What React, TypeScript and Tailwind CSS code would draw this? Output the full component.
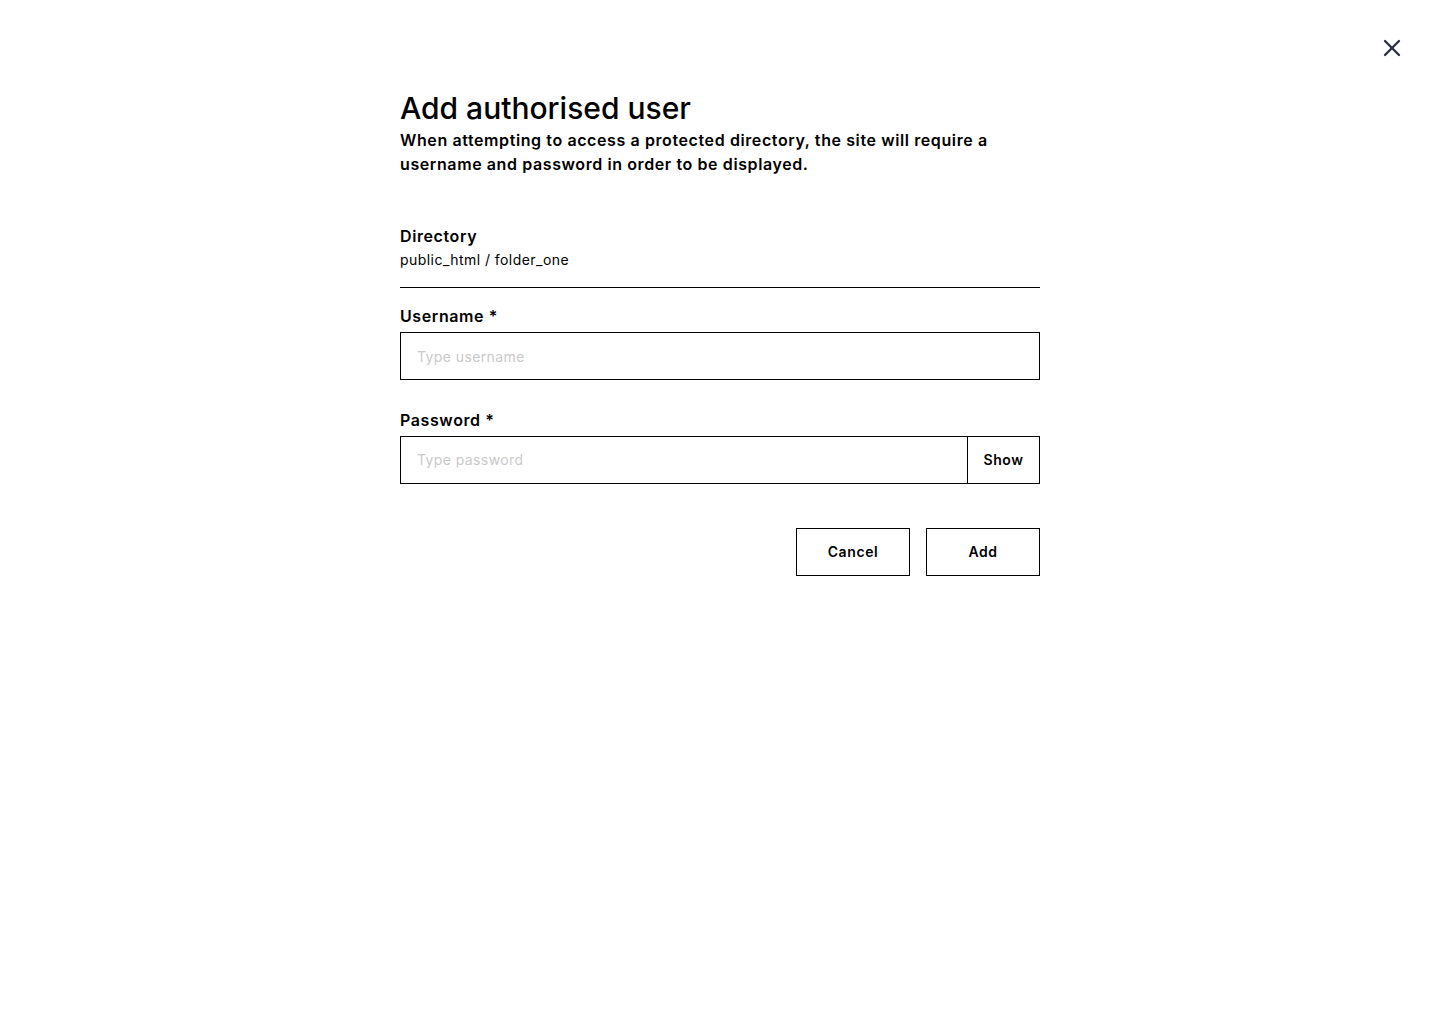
import { useState } from "react";
import { X } from "lucide-react";

function App() {
  const [username, setUsername] = useState("");
  const [password, setPassword] = useState("");
  const [show, setShow] = useState(false);

  return (
    <div
      className="relative min-h-screen bg-white text-black tracking-[0.6px]"
      style={{ fontFamily: "Inter, 'Noto Sans', sans-serif" }}
    >
      <button className="absolute right-[34px] top-[34px] text-[#2b2f45]" aria-label="Close">
        <X size={28} strokeWidth={2} />
      </button>

      <div className="ml-[400px] w-[640px] pt-[90px]">
        <h1 className="text-[30px] font-medium leading-9 tracking-normal">Add authorised user</h1>
        <p className="mt-0.5 text-base font-semibold leading-6">
          When attempting to access a protected directory, the site will require a username and password in order to be
          displayed.
        </p>

        <div className="mt-12 border-b border-black pb-[17px]">
          <p className="text-base font-semibold leading-6">Directory</p>
          <p className="mt-0.5 text-sm leading-5 tracking-[0.45px]">public_html / folder_one</p>
        </div>

        <div className="mt-4">
          <label className="block text-base font-semibold leading-6">Username *</label>
          <input
            value={username}
            onChange={(e) => setUsername(e.target.value)}
            placeholder="Type username"
            className="mt-1 h-12 w-full border border-black px-4 text-sm tracking-[0.4px] outline-none placeholder:text-[#c9c9c9]"
          />
        </div>

        <div className="mt-7">
          <label className="block text-base font-semibold leading-6">Password *</label>
          <div className="mt-1 flex h-12 border border-black">
            <input
              type={show ? "text" : "password"}
              value={password}
              onChange={(e) => setPassword(e.target.value)}
              placeholder="Type password"
              className="min-w-0 flex-1 px-4 text-sm tracking-[0.4px] outline-none placeholder:text-[#c9c9c9]"
            />
            <button
              onClick={() => setShow(!show)}
              className="w-[72px] border-l border-black text-sm font-semibold"
            >
              {show ? "Hide" : "Show"}
            </button>
          </div>
        </div>

        <div className="mt-11 flex justify-end gap-4">
          <button className="h-12 w-[114px] border border-black text-sm font-semibold">Cancel</button>
          <button className="h-12 w-[114px] border border-black text-sm font-semibold">Add</button>
        </div>
      </div>
    </div>
  );
}

export default App;
